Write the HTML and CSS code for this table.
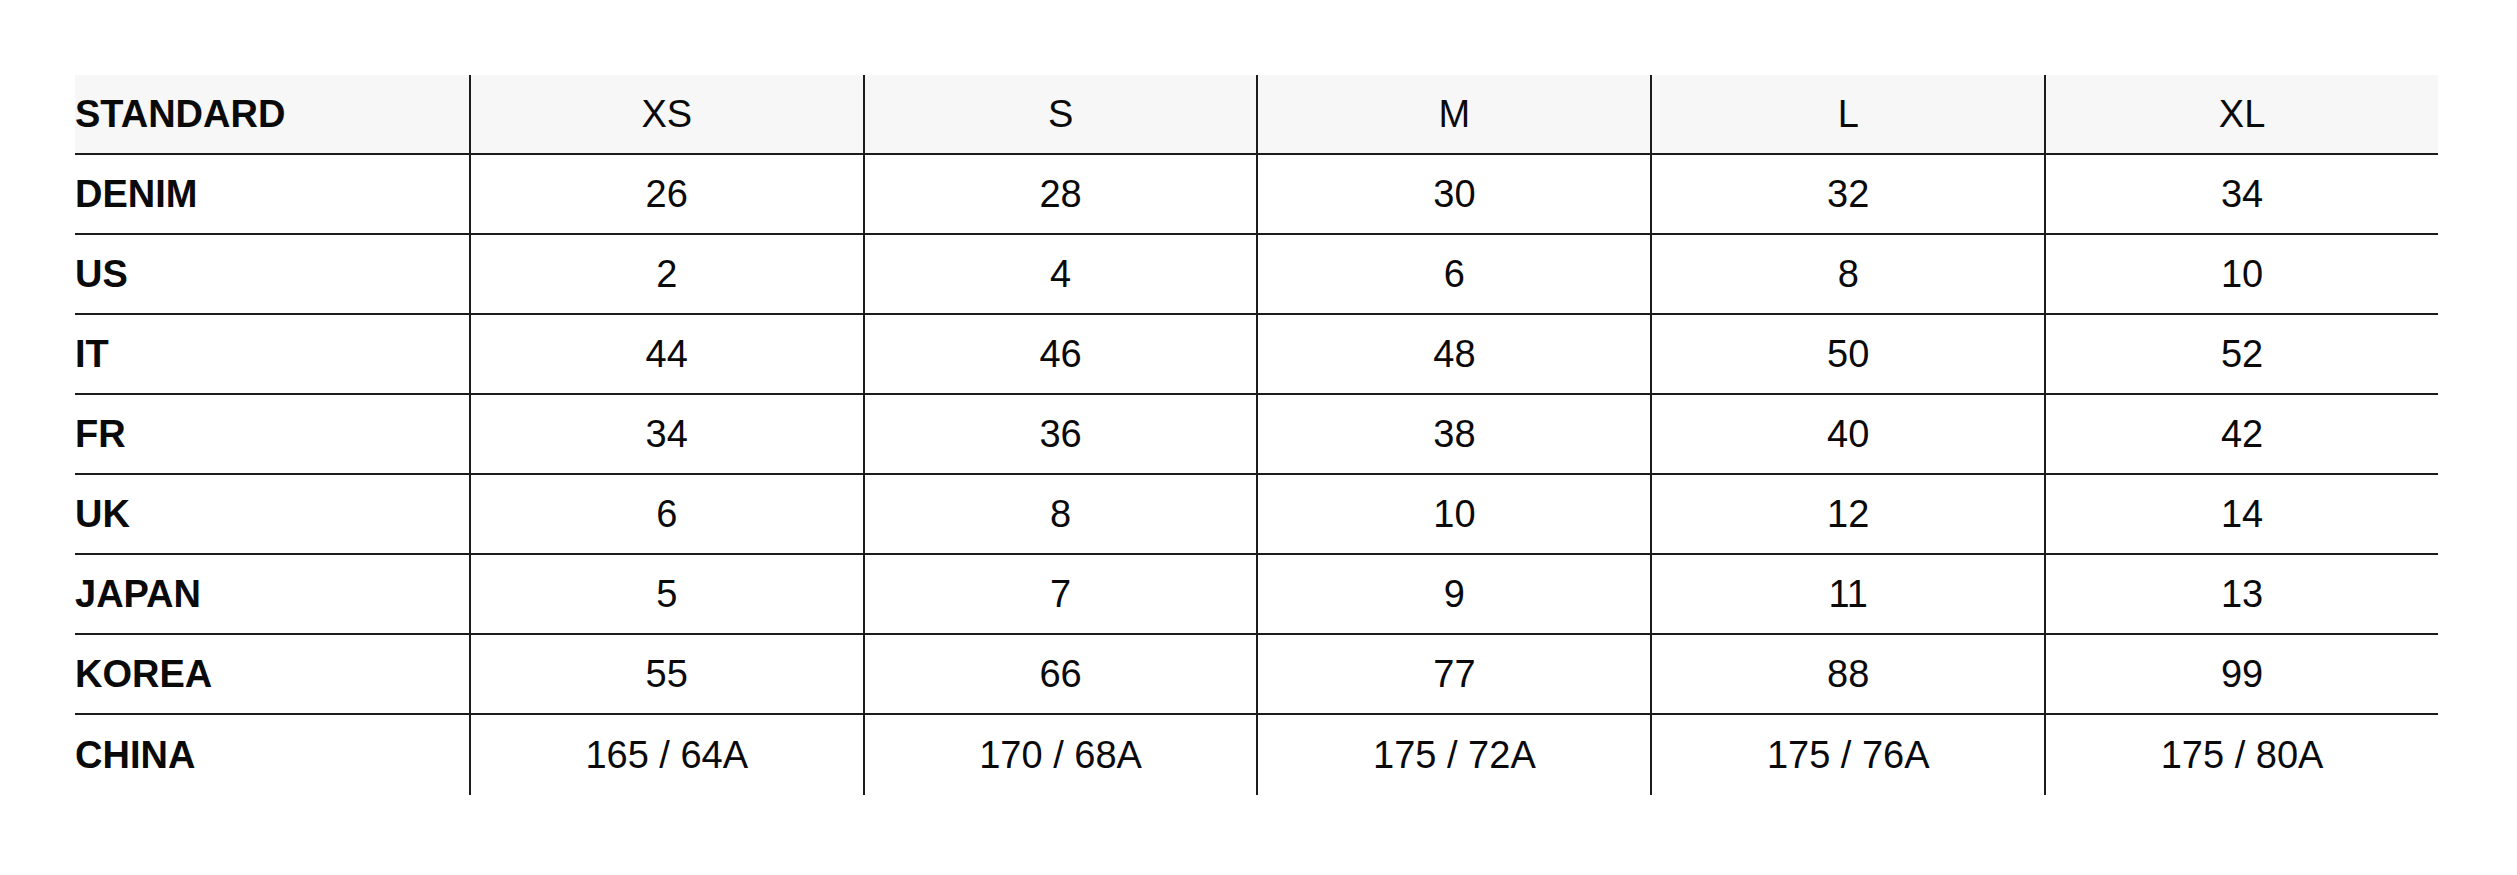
FILE: index.html
```html
<!DOCTYPE html>
<html lang="en">
<head>
<meta charset="utf-8">
<title>Size guide</title>
<link rel="stylesheet" href="styles.css">
</head>
<body>
<main class="page">
  <table class="sizes">
    <thead>
      <tr class="head">
        <th class="label">STANDARD</th><th>XS</th><th>S</th><th>M</th><th>L</th><th>XL</th>
      </tr>
    </thead>
    <tbody>
      <tr><th class="label">DENIM</th><td>26</td><td>28</td><td>30</td><td>32</td><td>34</td></tr>
      <tr><th class="label">US</th><td>2</td><td>4</td><td>6</td><td>8</td><td>10</td></tr>
      <tr><th class="label">IT</th><td>44</td><td>46</td><td>48</td><td>50</td><td>52</td></tr>
      <tr><th class="label">FR</th><td>34</td><td>36</td><td>38</td><td>40</td><td>42</td></tr>
      <tr><th class="label">UK</th><td>6</td><td>8</td><td>10</td><td>12</td><td>14</td></tr>
      <tr><th class="label">JAPAN</th><td>5</td><td>7</td><td>9</td><td>11</td><td>13</td></tr>
      <tr><th class="label">KOREA</th><td>55</td><td>66</td><td>77</td><td>88</td><td>99</td></tr>
      <tr class="last"><th class="label">CHINA</th><td>165 / 64A</td><td>170 / 68A</td><td>175 / 72A</td><td>175 / 76A</td><td>175 / 80A</td></tr>
    </tbody>
  </table>
</main>
</body>
</html>
```
FILE: styles.css
```css
html, body {
  margin: 0;
  padding: 0;
  background: #ffffff;
}

body {
  font-family: "Liberation Sans", Arial, sans-serif;
  color: #0a0a0a;
}

.page {
  padding: 75px 79px 80px 75px;
}

.sizes {
  width: 2363px;
  table-layout: fixed;
  border-collapse: separate;
  border-spacing: 0;
}

.sizes th,
.sizes td {
  box-sizing: border-box;
  height: 80px;
  padding: 0;
  font-size: 38px;
  font-weight: 400;
  text-align: center;
  vertical-align: middle;
  border-bottom: 2px solid #1c1c1c;
  border-left: 2px solid #1c1c1c;
  line-height: 1;
}

.sizes .label {
  text-align: left;
  font-weight: 700;
  border-left: none;
}

.sizes .head th {
  background: #f7f7f7;
}

.sizes .last th,
.sizes .last td {
  border-bottom: none;
}
```
